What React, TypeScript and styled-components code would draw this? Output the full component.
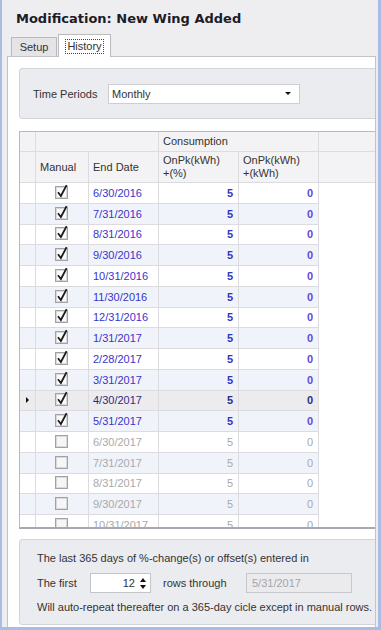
import React from 'react';
import styled, { createGlobalStyle, css } from 'styled-components';

const FONT = `"Liberation Sans", Arial, sans-serif`;
const TITLE_FONT = `"DejaVu Sans", Verdana, sans-serif`;

const GlobalStyle = createGlobalStyle`
  html, body {
    margin: 0;
    padding: 0;
    background: #fff;
  }
  body {
    font-family: ${FONT};
    font-size: 11px;
    color: #333;
  }
  * {
    box-sizing: border-box;
  }
`;

const Window = styled.div`
  width: 381px;
  height: 630px;
  background: #eeeef1;
  border-left: 2px solid #a9bde2;
  border-right: 3px solid #a9bde2;
  border-bottom: 3px solid #a9bde2;
  padding: 0 2px 0 5px;
  display: flex;
  flex-direction: column;
  overflow: hidden;
`;

const Title = styled.div`
  height: 34px;
  flex: none;
  padding: 11px 0 0 9px;
  font: bold 13px/15px ${TITLE_FONT};
  color: #1c1c28;
  white-space: nowrap;
`;

const TabStrip = styled.div`
  height: 23px;
  flex: none;
  margin-bottom: -1px;
  padding-left: 4px;
  display: flex;
  align-items: flex-start;
  gap: 1px;
  position: relative;
  z-index: 1;
`;

const Tab = styled.div<{ $active?: boolean; $w: number }>`
  width: ${(p) => p.$w}px;
  display: flex;
  align-items: center;
  justify-content: center;
  border: 1px solid #b9b9be;
  border-bottom: none;
  color: #333;
  ${(p) =>
    p.$active
      ? css`
          height: 23px;
          background: #fff;
        `
      : css`
          height: 19px;
          margin-top: 3px;
          background: #e4e4e7;
        `}
`;

const FocusText = styled.span`
  border: 1px dotted #444;
  padding: 1px 1px;
  line-height: 11px;
`;

const Panel = styled.div`
  flex: 1;
  background: #fff;
  border: 1px solid #c3c3c7;
  border-bottom: none;
  padding: 11px 0 0 11px;
  display: flex;
  flex-direction: column;
  overflow: hidden;
`;

const GroupBox = styled.div`
  width: 380px;
  flex: none;
  background: #ebecf0;
  border: 1px solid #d3d4d8;
  border-radius: 3px;
`;

const TimeGroup = styled(GroupBox)`
  height: 51px;
  display: flex;
  align-items: center;
  padding-left: 13px;
`;

const Label = styled.span<{ $w?: number }>`
  width: ${(p) => (p.$w ? `${p.$w}px` : 'auto')};
  flex: none;
  color: #333;
  white-space: nowrap;
`;

const Combo = styled.div`
  width: 192px;
  height: 20px;
  background: #fff;
  border: 1px solid #cdced3;
  display: flex;
  align-items: center;
  justify-content: space-between;
  padding: 0 8px 0 3px;
`;

const DownArrow = styled.span`
  width: 0;
  height: 0;
  border-left: 3px solid transparent;
  border-right: 3px solid transparent;
  border-top: 3px solid #111;
`;

const Grid = styled.div`
  margin-top: 12px;
  width: 380px;
  height: 398px;
  flex: none;
  background: #fff;
  border-top: 1px solid #b9b9bd;
  border-left: 1px solid #b9b9bd;
  border-bottom: 2px solid #a9a9ad;
  overflow: hidden;
`;

const BandRow = styled.div`
  height: 20px;
  display: grid;
  grid-template-columns: 16px 123px 160px 1fr;
`;

const HeaderRow = styled.div`
  height: 31px;
  display: grid;
  grid-template-columns: 16px 53px 70px 80px 80px 1fr;
`;

const HeadCell = styled.div`
  background: #f3f3f5;
  border-right: 1px solid #dcdce0;
  border-bottom: 1px solid #dcdce0;
  padding-left: 4px;
  display: flex;
  align-items: center;
  color: #333;
  line-height: 13px;
  white-space: nowrap;
`;

const DataRow = styled.div<{ $alt?: boolean; $focused?: boolean }>`
  height: 20.75px;
  display: grid;
  grid-template-columns: 16px 53px 70px 80px 80px 1fr;
  --row-bg: ${(p) => (p.$focused ? '#ececee' : p.$alt ? '#f0f3fa' : '#fff')};
`;

const Cell = styled.div<{ $align?: 'left' | 'center' | 'right' }>`
  background: var(--row-bg);
  border-right: 1px solid #dcdce0;
  border-bottom: 1px solid #dcdce0;
  display: flex;
  align-items: center;
  justify-content: ${(p) =>
    p.$align === 'center' ? 'center' : p.$align === 'right' ? 'flex-end' : 'flex-start'};
  padding: 0 5px 0 4px;
  white-space: nowrap;
`;

const Filler = styled.div`
  background: #fff;
`;

const RowPointer = styled.span`
  width: 0;
  height: 0;
  margin-left: 2px;
  border-top: 3px solid transparent;
  border-bottom: 3px solid transparent;
  border-left: 3px solid #111;
`;

const DateText = styled.span<{ $muted?: boolean; $focused?: boolean }>`
  color: ${(p) => (p.$muted ? '#a9a9ab' : p.$focused ? '#2c2c84' : '#3a33cc')};
`;

const NumText = styled.span<{ $muted?: boolean; $focused?: boolean; $tone: 'blue' | 'violet' }>`
  font-weight: ${(p) => (p.$muted ? 'normal' : 'bold')};
  color: ${(p) =>
    p.$muted ? '#a9a9ab' : p.$focused ? '#2c2c84' : p.$tone === 'blue' ? '#3434c4' : '#6247dc'};
`;

const InfoGroup = styled(GroupBox)`
  margin-top: 10px;
  height: 86px;
  padding: 11px 0 0 17px;
  display: flex;
  flex-direction: column;
`;

const InfoLine = styled.div`
  height: 14px;
  line-height: 14px;
  white-space: nowrap;
  color: #333;
`;

const InputRow = styled.div`
  height: 20px;
  margin: 8px 0 7px;
  display: flex;
  align-items: center;
`;

const SpinBox = styled.div`
  width: 61px;
  height: 20px;
  flex: none;
  margin-right: 12px;
  background: #fff;
  border: 1px solid #c4c5ca;
  display: flex;
  align-items: center;
  justify-content: flex-end;
  padding-right: 4px;
  gap: 5px;
`;

const SpinArrows = styled.span`
  display: flex;
  flex-direction: column;
  gap: 3px;
`;

const SpinArrow = styled.span<{ $up?: boolean }>`
  width: 0;
  height: 0;
  border-left: 3.5px solid transparent;
  border-right: 3.5px solid transparent;
  ${(p) => (p.$up ? 'border-bottom: 4px solid #111;' : 'border-top: 4px solid #111;')}
`;

const DisabledBox = styled.div`
  width: 106px;
  height: 20px;
  flex: none;
  background: #ebebee;
  border: 1px solid #c8c8cc;
  padding-left: 5px;
  display: flex;
  align-items: center;
  color: #a5a5a8;
`;

const CheckBox = ({ checked }: { checked: boolean }) => (
  <svg width="14" height="16" viewBox="0 0 14 16" style={{ marginTop: -2 }}>
    <rect x="0.5" y="2.5" width="12" height="12" fill="#fff" stroke="#a2a2a6" />
    <rect x="1.5" y="3.5" width="10" height="10" fill={checked ? '#fafafa' : '#f6f6f7'} stroke="#d9d9dc" />
    {checked && (
      <path d="M3 8.3 L5.9 12 L11.6 1.2" fill="none" stroke="#1b1b1b" strokeWidth="1.8" />
    )}
  </svg>
);

const dates = [
  '6/30/2016',
  '7/31/2016',
  '8/31/2016',
  '9/30/2016',
  '10/31/2016',
  '11/30/2016',
  '12/31/2016',
  '1/31/2017',
  '2/28/2017',
  '3/31/2017',
  '4/30/2017',
  '5/31/2017',
  '6/30/2017',
  '7/31/2017',
  '8/31/2017',
  '9/30/2017',
  '10/31/2017',
];

const MANUAL_ROWS = 12;
const FOCUSED = 10;

export default function App() {
  return (
    <>
      <GlobalStyle />
      <Window>
        <Title>Modification: New Wing Added</Title>

        <TabStrip>
          <Tab $w={46}>Setup</Tab>
          <Tab $w={53} $active>
            <FocusText>History</FocusText>
          </Tab>
        </TabStrip>

        <Panel>
          <TimeGroup>
            <Label $w={75}>Time Periods</Label>
            <Combo>
              <span>Monthly</span>
              <DownArrow />
            </Combo>
          </TimeGroup>

          <Grid>
            <BandRow>
              <HeadCell />
              <HeadCell />
              <HeadCell>Consumption</HeadCell>
              <HeadCell />
            </BandRow>
            <HeaderRow>
              <HeadCell />
              <HeadCell>Manual</HeadCell>
              <HeadCell>End Date</HeadCell>
              <HeadCell>
                OnPk(kWh)
                <br />
                +(%)
              </HeadCell>
              <HeadCell>
                OnPk(kWh)
                <br />
                +(kWh)
              </HeadCell>
              <HeadCell />
            </HeaderRow>

            {dates.map((d, i) => {
              const checked = i < MANUAL_ROWS;
              const focused = i === FOCUSED;
              const muted = !checked;
              return (
                <DataRow key={d} $alt={i % 2 === 1} $focused={focused}>
                  <Cell>{focused && <RowPointer />}</Cell>
                  <Cell $align="center">
                    <CheckBox checked={checked} />
                  </Cell>
                  <Cell>
                    <DateText $muted={muted} $focused={focused}>
                      {d}
                    </DateText>
                  </Cell>
                  <Cell $align="right">
                    <NumText $muted={muted} $focused={focused} $tone="blue">
                      5
                    </NumText>
                  </Cell>
                  <Cell $align="right">
                    <NumText $muted={muted} $focused={focused} $tone="violet">
                      0
                    </NumText>
                  </Cell>
                  <Filler />
                </DataRow>
              );
            })}
          </Grid>

          <InfoGroup>
            <InfoLine>The last 365 days of %-change(s) or offset(s) entered in</InfoLine>
            <InputRow>
              <Label $w={53}>The first</Label>
              <SpinBox>
                <span>12</span>
                <SpinArrows>
                  <SpinArrow $up />
                  <SpinArrow />
                </SpinArrows>
              </SpinBox>
              <Label $w={83}>rows through</Label>
              <DisabledBox>5/31/2017</DisabledBox>
            </InputRow>
            <InfoLine>Will auto-repeat thereafter on a 365-day cicle except in manual rows.</InfoLine>
          </InfoGroup>
        </Panel>
      </Window>
    </>
  );
}
